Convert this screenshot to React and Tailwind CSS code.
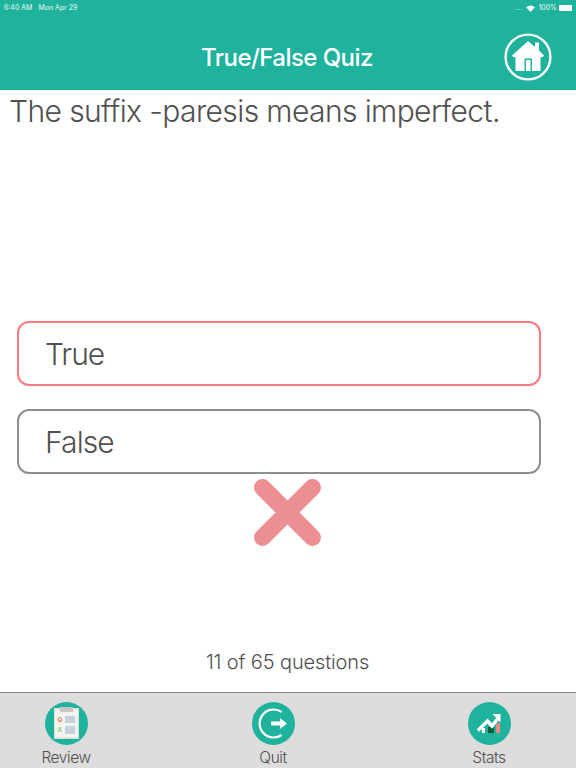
import React from 'react';

const font = { fontFamily: 'Inter, "Noto Sans", sans-serif' };

const HomeIcon = () => (
  <svg width="48" height="48" viewBox="0 0 48 48">
    <circle cx="24" cy="24" r="22.4" fill="none" stroke="#fff" strokeWidth="2.4" />
    <path fill="#fff" d="M24 8 L31 14 V9.5 H35 V17.5 L40 22.5 L38.8 24 H36.5 V38 H11.5 V24 H9.2 L8 22.5 Z" />
    <path fill="#1fb29d" d="M20.5 25.5 H28 V38 H20.5 Z" />
    <path fill="#fff" d="M22 27 H26.5 V38 H22 Z" />
  </svg>
);

const ReviewIcon = () => (
  <svg width="44" height="44" viewBox="0 0 44 44">
    <circle cx="21.5" cy="21.5" r="21.5" fill="#1fb29d" />
    <rect x="9" y="6" width="25" height="31" fill="#dcdcd8" />
    <rect x="10" y="7.5" width="23" height="28" fill="#f4f4f0" />
    <rect x="15" y="5" width="13" height="5" fill="#c6c6c3" />
    <text x="12.5" y="20" fontSize="6" fontWeight="700" fill="#e8764f" fontFamily="Inter">Q</text>
    <text x="12.5" y="30" fontSize="6" fontWeight="700" fill="#9ccb6b" fontFamily="Inter">A</text>
    <rect x="20" y="14" width="10" height="7" fill="#c4d2dc" />
    <rect x="20" y="24" width="10" height="8" fill="#c4d2dc" />
  </svg>
);

const QuitIcon = () => (
  <svg width="44" height="44" viewBox="0 0 44 44">
    <circle cx="21.5" cy="21.5" r="21.5" fill="#1fb29d" />
    <path d="M29.6 10 A14 14 0 1 0 29.6 33" fill="none" stroke="#fff" strokeWidth="2.2" />
    <path fill="#fff" d="M19 19.5 H28 V16 L35 21.5 L28 27 V23.5 H19 Z" />
  </svg>
);

const StatsIcon = () => (
  <svg width="44" height="44" viewBox="0 0 44 44">
    <circle cx="21.5" cy="21.5" r="21.5" fill="#1fb29d" />
    <rect x="20" y="25" width="6" height="6" fill="#0f5c3a" />
    <rect x="14" y="26" width="3" height="5" fill="#fff" />
    <path fill="#f08a84" d="M28 22 L30 21 H32 V31 H28 Z" />
    <path d="M10 28.5 L19.5 19 L24 24 L31 15" fill="none" stroke="#fff" strokeWidth="3.4" />
    <path fill="#fff" d="M24.5 12 H32.5 V20.5 Z" />
  </svg>
);

const tabs = [
  { label: 'Review', Icon: ReviewIcon },
  { label: 'Quit', Icon: QuitIcon },
  { label: 'Stats', Icon: StatsIcon },
];

const App = () => {
  return (
    <div className="w-[576px] h-[768px] flex flex-col bg-white overflow-hidden" style={font}>
      {/* Header */}
      <div className="h-[90px] bg-[#1fb29d] text-white flex flex-col shrink-0">
        <div className="h-3 flex items-center justify-between pl-1 pr-1 text-[7px] mt-0.5 text-white/90">
          <div className="flex gap-[6px]">
            <span>6:40 AM</span>
            <span>Mon Apr 29</span>
          </div>
          <div className="flex items-center gap-[2px]">
            <div className="flex gap-[1px] mr-[2px] mt-[3px]">
              <span className="w-[1px] h-[1px] bg-white/50" />
              <span className="w-[1px] h-[1px] bg-white/50" />
              <span className="w-[1px] h-[1px] bg-white/50" />
              <span className="w-[1px] h-[1px] bg-white/50" />
            </div>
            <svg width="9" height="7" viewBox="0 0 18 14">
              <path fill="#fff" d="M9 14 L0 4.5 Q9 -2.5 18 4.5 Z" />
            </svg>
            <span className="ml-[1px]">100%</span>
            <div className="w-[13px] h-[6px] bg-white rounded-[1px]" />
          </div>
        </div>
        <div className="flex-1 flex items-center justify-between pl-[199px] pr-6 pt-[10px]">
          <h1 className="text-[24px] font-medium leading-none ml-[2px] mt-[2px] tracking-[-0.55px]">True/False Quiz</h1>
          <HomeIcon />
        </div>
      </div>

      {/* Question */}
      <p className="pl-[9px] text-[30px] font-[350] leading-[42px] tracking-[-0.6px] text-[#505050] h-[231px] shrink-0">
        The suffix -paresis means imperfect.
      </p>

      {/* Answers */}
      <div className="pl-[17px] flex flex-col gap-[23px]">
        <div className="w-[524px] h-[65px] rounded-[12px] border-2 border-[#fa7a80] flex items-center pl-[26px] pt-[2px] text-[30px] font-[350] tracking-[-1px] text-[#505050]">
          True
        </div>
        <div className="w-[524px] h-[65px] rounded-[12px] border-2 border-[#8f8f8f] flex items-center pl-[26px] pt-[2px] text-[30px] font-[350] tracking-[-0.9px] text-[#505050]">
          False
        </div>
      </div>

      <div className="flex justify-center mt-[4.5px] pr-[1px]">
        <svg width="67" height="67" viewBox="0 0 67 67">
          <path d="M8.5 8.5 L58.5 58.5 M58.5 8.5 L8.5 58.5" stroke="#ec8f93" strokeWidth="17" strokeLinecap="round" />
        </svg>
      </div>

      <div className="flex-1 flex items-end justify-center pb-[18px] pr-[1px]">
        <span className="text-[20px] font-[350] leading-6 tracking-[-0.13px] text-[#505050]">11 of 65 questions</span>
      </div>

      {/* Bottom bar */}
      <div className="h-[76px] bg-[#dddddd] border-t border-[#8c8c8c] grid grid-cols-[132px_282px_150px] shrink-0">
        {tabs.map(({ label, Icon }) => (
          <div key={label} className="flex flex-col items-center pt-[9px]">
            <div className="ml-[1px]">
              <Icon />
            </div>
            <span className="text-[15.5px] font-[350] leading-5 tracking-[-0.45px] text-[#505050] mt-[2px]">{label}</span>
          </div>
        ))}
      </div>
    </div>
  );
};

export default App;
